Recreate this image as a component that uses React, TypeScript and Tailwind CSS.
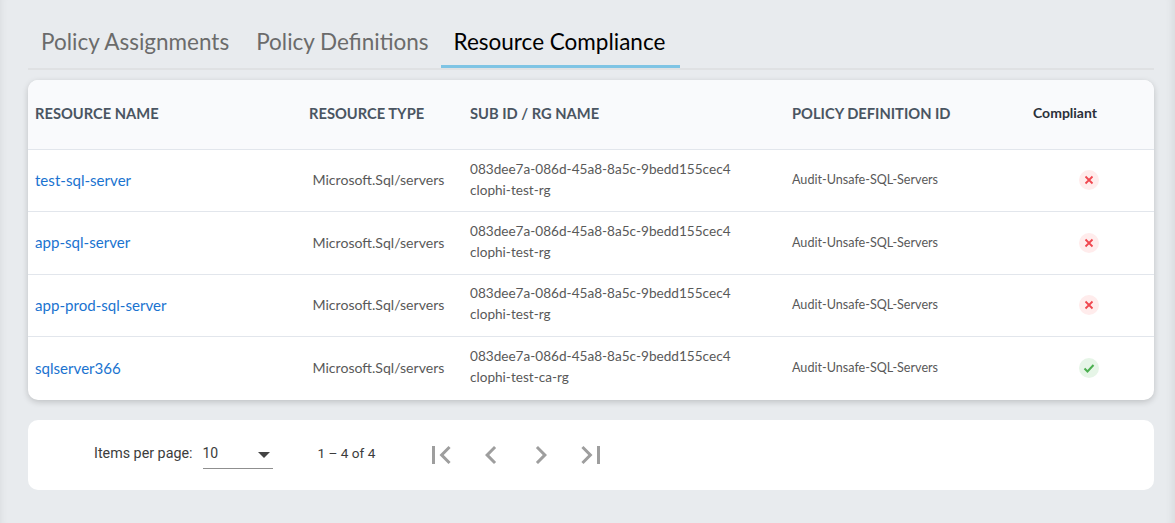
const rows = [
  { name: "test-sql-server", rg: "clophi-test-rg", ok: false },
  { name: "app-sql-server", rg: "clophi-test-rg", ok: false },
  { name: "app-prod-sql-server", rg: "clophi-test-rg", ok: false },
  { name: "sqlserver366", rg: "clophi-test-ca-rg", ok: true },
]

function PagerIcon({ d }: { d: string }) {
  return (
    <svg width="36" height="36" viewBox="0 0 24 24" className="fill-[#9e9e9e]">
      <path d={d} />
    </svg>
  )
}

export default function App() {
  return (
    <div className="h-[523px] w-[1175px] overflow-hidden bg-[#e8ebee] pl-7 pr-[21px] pt-[14px] font-['Lato',sans-serif] shadow-[inset_8px_0_8px_-8px_rgba(0,0,0,0.08),inset_-10px_0_8px_-8px_rgba(0,0,0,0.08)]">
      <div className="flex h-[56px] items-stretch border-b-2 border-[#dfe1e3] text-[22.5px]">
        <div className="flex h-[54px] items-center pl-[13px] pr-[14px] pt-[2px] text-[#6b6b6b]">Policy Assignments</div>
        <div className="flex h-[54px] items-center pl-[13px] pr-[12px] pt-[2px] text-[#6b6b6b]">Policy Definitions</div>
        <div className="flex h-[54px] items-center border-b-[3px] border-[#7ec4e4] pl-[13px] pr-[15px] pt-[5px] text-black">Resource Compliance</div>
      </div>

      <div className="mt-[10px] overflow-hidden rounded-[10px] bg-white shadow-[0_2px_6px_rgba(0,0,0,0.18)]">
        <div className="flex h-[70px] items-center border-b border-[#e2e6ec] bg-[#f9fafc] pb-[3px] text-[14.7px] font-bold text-[#4a5562]">
          <div className="ml-[7px] w-[274px]">RESOURCE NAME</div>
          <div className="w-[161px]">RESOURCE TYPE</div>
          <div className="w-[322px]">SUB ID / RG NAME</div>
          <div className="w-[241px]">POLICY DEFINITION ID</div>
          <div className="mb-[2px] text-[14px] text-[#2b303a]">Compliant</div>
        </div>
        {rows.map((row, i) => (
          <div key={row.name} className={`flex h-[62.4px] items-center pb-[1px] ${i < 3 ? "border-b border-[#e2e6ec]" : ""}`}>
            <div className="ml-[7px] w-[274px] text-[15.1px] text-[#1a73d0]">{row.name}</div>
            <div className="mb-[1px] w-[161px] pl-[3.5px] text-[14.1px] text-[#595959]">Microsoft.Sql/servers</div>
            <div className="mb-[1px] w-[322px] text-[13.6px] leading-[21px] text-[#595959]">
              <div>083dee7a-086d-45a8-8a5c-9bedd155cec4</div>
              <div>{row.rg}</div>
            </div>
            <div className="w-[287px] pt-[1px] text-[12.6px] text-[#595959]">Audit-Unsafe-SQL-Servers</div>
            <div className={`flex h-5 w-5 items-center justify-center rounded-full ${row.ok ? "bg-[#e6f5e7]" : "bg-[#ffecec]"}`}>
              {row.ok ? (
                <svg width="12" height="12" viewBox="0 0 12 12" fill="none" className="stroke-[#4caf50]" strokeWidth="2">
                  <path d="M1.5 6.5 4.5 9.5 10.5 3" />
                </svg>
              ) : (
                <svg width="10" height="10" viewBox="0 0 10 10" fill="none" className="stroke-[#f0474f]" strokeWidth="1.8">
                  <path d="M1.5 1.5 8.5 8.5M8.5 1.5 1.5 8.5" />
                </svg>
              )}
            </div>
          </div>
        ))}
      </div>

      <div className="mt-5 flex h-[70px] items-center rounded-[10px] bg-white pl-[66px] font-['Roboto',sans-serif] text-[14.3px] text-[#3c3c3c]">
        <span className="mb-[2px]">Items per page:</span>
        <div className="mb-[3px] ml-[10px] flex h-[32px] w-[70px] items-center justify-between border-b border-[#8f8f8f] pt-[1px]">
          <span className="text-[14px]">10</span>
          <span className="mr-[3px] mt-[4px] h-0 w-0 border-x-[6.5px] border-t-[6.5px] border-x-transparent border-t-[#444]" />
        </div>
        <span className="mb-[2px] ml-[45px] text-[13.6px]">1 – 4 of 4</span>
        <div className="ml-[48px] flex items-center gap-[14px]">
          <PagerIcon d="M18.41 16.59 13.82 12l4.59-4.59L17 6l-6 6 6 6zM6 6h2v12H6z" />
          <PagerIcon d="M15.41 7.41 14 6l-6 6 6 6 1.41-1.41L10.83 12z" />
          <PagerIcon d="M10 6 8.59 7.41 13.17 12l-4.58 4.59L10 18l6-6z" />
          <PagerIcon d="M5.59 7.41 10.18 12l-4.59 4.59L7 18l6-6-6-6zM16 6h2v12h-2z" />
        </div>
      </div>
    </div>
  )
}
